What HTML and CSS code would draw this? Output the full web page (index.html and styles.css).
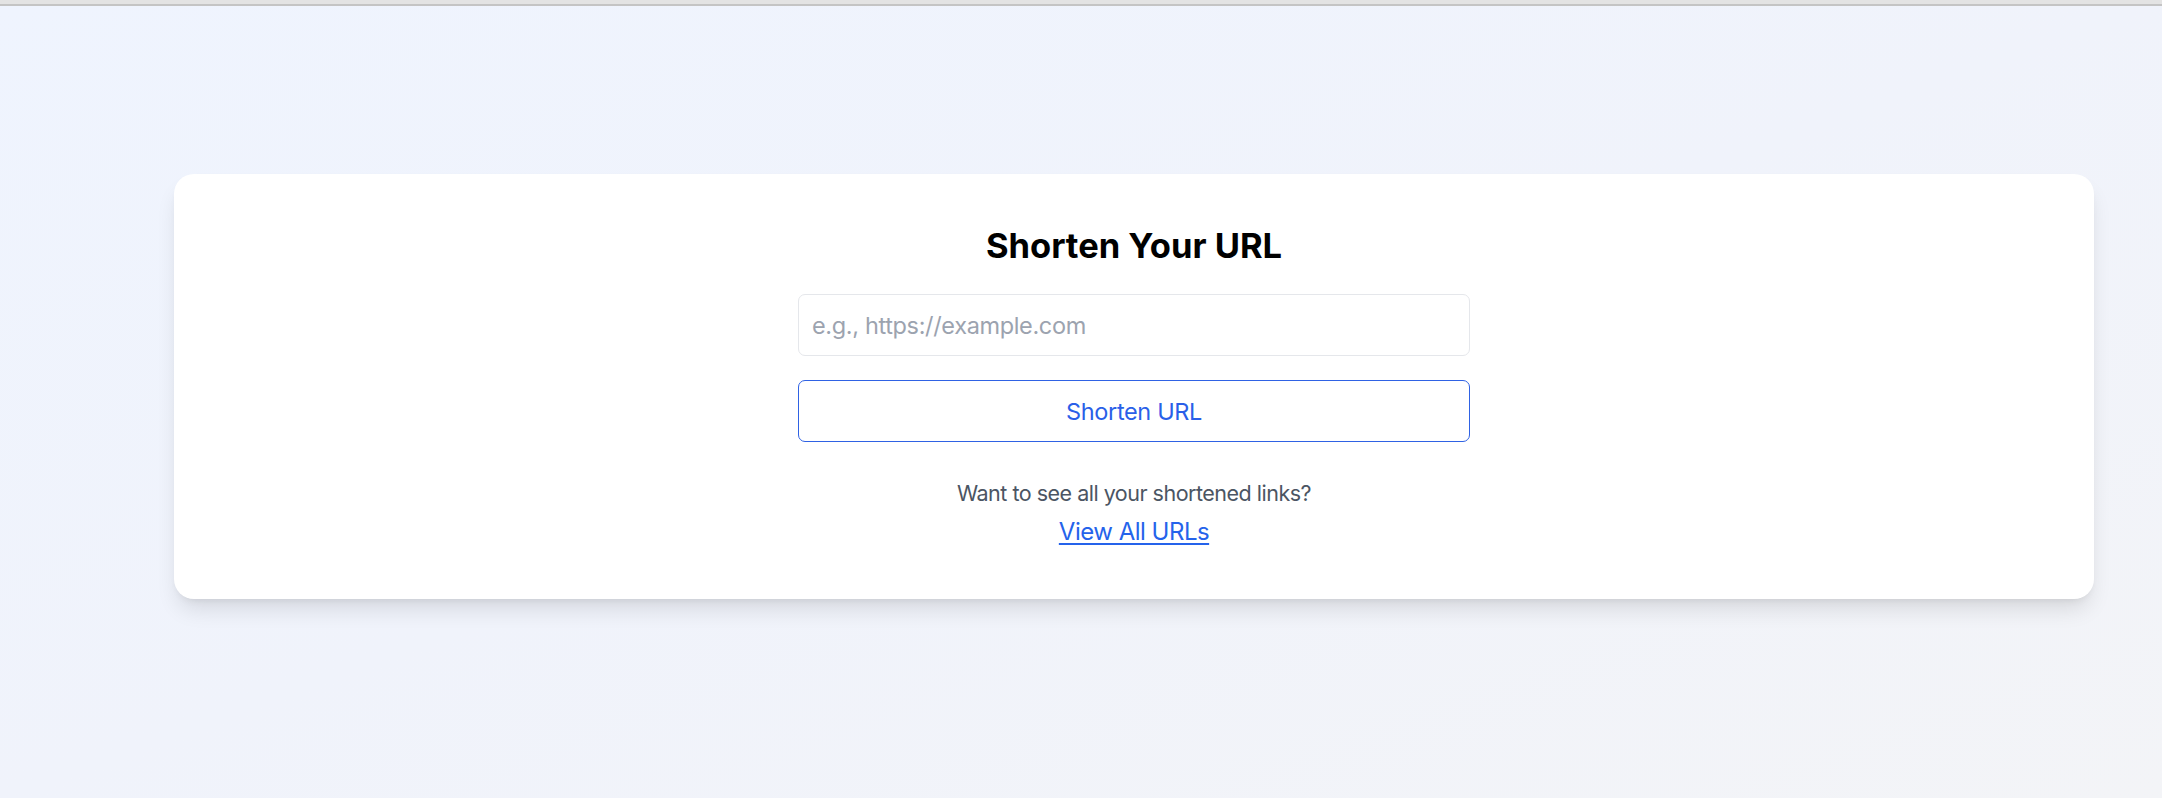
FILE: index.html
```html
<!DOCTYPE html>
<html lang="en">
<head>
<meta charset="utf-8">
<title>Shorten Your URL</title>
<link rel="stylesheet" href="styles.css">
</head>
<body>
<div class="topbar"></div>
<main class="page">
  <section class="card">
    <h1 class="title">Shorten Your URL</h1>
    <form class="form">
      <input class="url-input" type="text" placeholder="e.g., https://example.com">
      <button class="submit" type="button">Shorten URL</button>
    </form>
    <p class="hint">Want to see all your shortened links?</p>
    <a class="view-all" href="#">View All URLs</a>
  </section>
</main>
</body>
</html>
```

FILE: styles.css
```css
* { box-sizing: border-box; }

html, body {
  margin: 0;
  padding: 0;
}

body {
  min-height: 798px;
  font-family: Inter, "Liberation Sans", Arial, sans-serif;
  background: linear-gradient(to bottom right, #eff4fe 0%, #f0f3fb 50%, #f3f4f7 100%);
  display: flex;
  flex-direction: column;
}

.topbar {
  height: 6px;
  background: #e3e3e3;
  border-bottom: 2px solid #c4c4c4;
  flex: none;
}

.page {
  flex: 1;
  padding: 168px 68px 0 174px;
}

.card {
  background: #ffffff;
  border-radius: 20px;
  box-shadow: 0 14px 22px -4px rgba(0, 0, 0, 0.11), 0 5px 9px -5px rgba(0, 0, 0, 0.1);
  padding: 52px 0 49px;
  display: flex;
  flex-direction: column;
  align-items: center;
}

.title {
  margin: 0;
  font-size: 34.5px;
  line-height: 40px;
  font-weight: 700;
  color: #000000;
}

.form {
  margin-top: 28px;
  width: 672px;
  display: flex;
  flex-direction: column;
  gap: 24px;
}

.url-input {
  height: 62px;
  width: 100%;
  border: 1px solid #e5e7eb;
  border-radius: 7px;
  padding: 0 13px;
  font-family: inherit;
  font-size: 23.5px;
  letter-spacing: -0.35px;
  color: #111827;
  background: #ffffff;
  outline: none;
}

.url-input::placeholder {
  color: #9ca3af;
}

.submit {
  height: 62px;
  width: 100%;
  border: 1.5px solid #2f62e4;
  border-radius: 7px;
  background: #ffffff;
  color: #2a5fe8;
  font-family: inherit;
  font-size: 23.5px;
  letter-spacing: -0.35px;
  cursor: pointer;
}

.hint {
  margin: 35px 0 0;
  font-size: 21.5px;
  letter-spacing: -0.5px;
  line-height: 33px;
  color: #4b5563;
}

.view-all {
  margin-top: 4px;
  font-size: 24px;
  letter-spacing: -0.5px;
  line-height: 36px;
  color: #2563eb;
  text-decoration: underline;
  text-underline-offset: 3px;
  text-decoration-thickness: 1.5px;
}
```
